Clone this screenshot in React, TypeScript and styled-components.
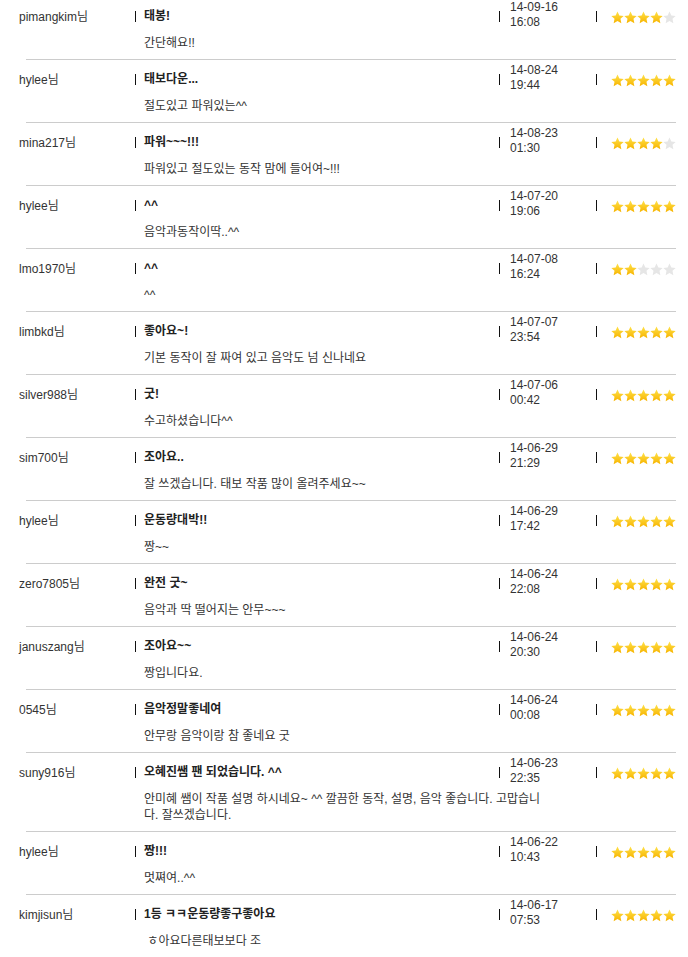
import React from "react";
import styled, { createGlobalStyle } from "styled-components";

type Review = {
  user: string;
  title: string;
  body: string;
  date: string;
  time: string;
  rating: number;
};

const reviews: Review[] = [
  { user: "pimangkim", title: "태봉!", body: "간단해요!!", date: "14-09-16", time: "16:08", rating: 4 },
  { user: "hylee", title: "태보다운...", body: "절도있고 파워있는^^", date: "14-08-24", time: "19:44", rating: 5 },
  { user: "mina217", title: "파워~~~!!!", body: "파워있고 절도있는 동작 맘에 들어여~!!!", date: "14-08-23", time: "01:30", rating: 4 },
  { user: "hylee", title: "^^", body: "음악과동작이딱..^^", date: "14-07-20", time: "19:06", rating: 5 },
  { user: "lmo1970", title: "^^", body: "^^", date: "14-07-08", time: "16:24", rating: 2 },
  { user: "limbkd", title: "좋아요~!", body: "기본 동작이 잘 짜여 있고 음악도 넘 신나네요", date: "14-07-07", time: "23:54", rating: 5 },
  { user: "silver988", title: "굿!", body: "수고하셨습니다^^", date: "14-07-06", time: "00:42", rating: 5 },
  { user: "sim700", title: "조아요..", body: "잘 쓰겠습니다. 태보 작품 많이 올려주세요~~", date: "14-06-29", time: "21:29", rating: 5 },
  { user: "hylee", title: "운동량대박!!", body: "짱~~", date: "14-06-29", time: "17:42", rating: 5 },
  { user: "zero7805", title: "완전 굿~", body: "음악과 딱 떨어지는 안무~~~", date: "14-06-24", time: "22:08", rating: 5 },
  { user: "januszang", title: "조아요~~", body: "짱입니다요.", date: "14-06-24", time: "20:30", rating: 5 },
  { user: "0545", title: "음악정말좋네여", body: "안무랑 음악이랑 참 좋네요 굿", date: "14-06-24", time: "00:08", rating: 5 },
  {
    user: "suny916",
    title: "오혜진쌤 팬 되었습니다. ^^",
    body: "안미혜 쌤이 작품 설명 하시네요~ ^^ 깔끔한 동작, 설명, 음악 좋습니다. 고맙습니다. 잘쓰겠습니다.",
    date: "14-06-23",
    time: "22:35",
    rating: 5,
  },
  { user: "hylee", title: "짱!!!", body: "멋쪄여..^^", date: "14-06-22", time: "10:43", rating: 5 },
  { user: "kimjisun", title: "1등 ㅋㅋ운동량좋구좋아요", body: " ㅎ아요다른태보보다 조", date: "14-06-17", time: "07:53", rating: 5 },
];

const Star: React.FC<{ on: boolean; id: string }> = ({ on, id }) => (
  <svg width="13" height="13" viewBox="0 0 24 24">
    <defs>
      <linearGradient id={id} x1="0" y1="0" x2="0" y2="1">
        <stop offset="0%" stopColor="#ffe24a" />
        <stop offset="100%" stopColor="#f7b400" />
      </linearGradient>
    </defs>
    <path
      d="M12 0.8l3.4 7.3 8 0.9-5.9 5.5 1.6 7.9L12 18.4l-7.1 4 1.6-7.9L0.6 9l8-0.9z"
      fill={on ? `url(#${id})` : "#e6e6e6"}
    />
  </svg>
);

const App: React.FC = () => {
  return (
    <>
      <GlobalStyle />
      <List>
        {reviews.map((r, i) => (
          <React.Fragment key={i}>
            {i > 0 && <Divider />}
            <Item>
              <Name>{r.user}님</Name>
              <TitleCell>
                <Bar />
                <Title>{r.title}</Title>
              </TitleCell>
              <DateCell>
                <Bar />
                <DateText>
                  {r.date}
                  <br />
                  {r.time}
                </DateText>
              </DateCell>
              <StarCell>
                <Bar />
                <Stars>
                  {[0, 1, 2, 3, 4].map((s) => (
                    <Star key={s} on={s < r.rating} id={`g${i}-${s}`} />
                  ))}
                </Stars>
              </StarCell>
              <Body>{r.body}</Body>
            </Item>
          </React.Fragment>
        ))}
      </List>
    </>
  );
};

export default App;

const GlobalStyle = createGlobalStyle`
  body {
    margin: 0;
    background: #fff;
    font-family: "Liberation Sans", "Noto Sans CJK KR", sans-serif;
    font-size: 12px;
    color: #333;
  }
`;

const List = styled.div`
  margin-top: -3px;
  width: 688px;
`;

const Divider = styled.div`
  height: 1px;
  margin-left: 26px;
  width: 650px;
  background: #cccccc;
`;

const Item = styled.div`
  display: grid;
  grid-template-columns: 135px 364px 97px 1fr;
  grid-template-rows: 38px auto;
  padding-bottom: 8px;
`;

const Name = styled.div`
  padding-left: 19px;
  display: flex;
  align-items: center;
  line-height: 16px;
  color: #333;
  padding-top: 2px;
`;

const Bar = styled.span`
  display: inline-block;
  width: 1px;
  height: 11px;
  background: #111;
  flex: none;
`;

const TitleCell = styled.div`
  display: flex;
  align-items: center;
  gap: 8px;
`;

const Title = styled.span`
  font-weight: bold;
  color: #222;
  line-height: 16px;
`;

const DateCell = styled.div`
  display: flex;
  align-items: center;
  gap: 10px;
`;

const DateText = styled.div`
  line-height: 15px;
  color: #333;
  margin-top: -2px;
`;

const StarCell = styled.div`
  display: flex;
  align-items: center;
  gap: 14px;
`;

const Stars = styled.div`
  display: flex;
  margin-top: 3px;
`;

const Body = styled.div`
  grid-column: 2 / 4;
  padding: 0 50px 0 9px;
  line-height: 16px;
  color: #333;
  white-space: pre-wrap;
  word-break: break-all;
`;
